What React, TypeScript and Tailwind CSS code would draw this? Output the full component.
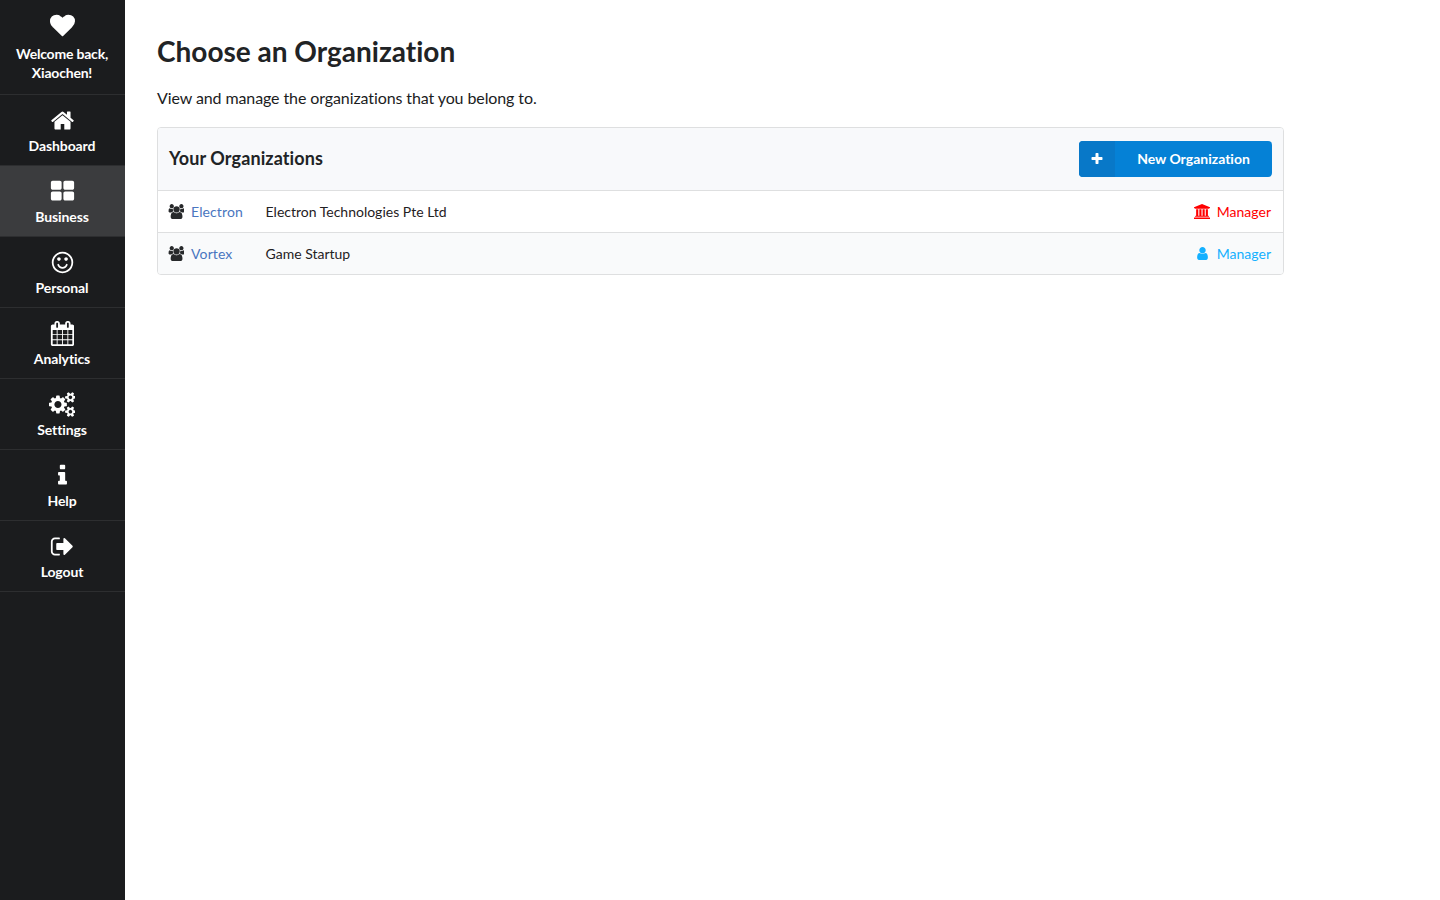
import React from "react";

const P = {
  heart: "M896 1664q-26 0-44-18l-624-602q-10-8-27.5-26t-55.5-65.5-68-97.5-53.5-121-23.5-138q0-220 127-344t351-124q62 0 126.5 21.5t120 58 95.5 68.5 76 68q36-36 76-68t95.5-68.5 120-58 126.5-21.5q224 0 351 124t127 344q0 221-229 450l-623 600q-18 18-44 18z",
  home: "M1472 992v480q0 26-19 45t-45 19h-384v-384h-256v384h-384q-26 0-45-19t-19-45v-480q0-1 .5-3t.5-3l575-474 575 474q1 2 1 6zm223-69l-62 74q-8 9-21 11h-3q-13 0-21-7l-692-577-692 577q-12 8-24 7-13-2-21-11l-62-74q-8-10-7-23.5t11-21.5l719-599q32-26 76-26t76 26l244 204v-195q0-14 9-23t23-9h192q14 0 23 9t9 23v408l219 182q10 8 11 21.5t-7 23.5z",
  grid: "M832 1024v384q0 52-38 90t-90 38h-512q-52 0-90-38t-38-90v-384q0-52 38-90t90-38h512q52 0 90 38t38 90zm0-768v384q0 52-38 90t-90 38h-512q-52 0-90-38t-38-90v-384q0-52 38-90t90-38h512q52 0 90 38t38 90zm896 768v384q0 52-38 90t-90 38h-512q-52 0-90-38t-38-90v-384q0-52 38-90t90-38h512q52 0 90 38t38 90zm0-768v384q0 52-38 90t-90 38h-512q-52 0-90-38t-38-90v-384q0-52 38-90t90-38h512q52 0 90 38t38 90z",
  smile: "M1262 1075q-37 121-138 195t-228 74-228-74-138-195q-8-25 4-48.5t38-31.5q25-8 48.5 4t31.5 38q25 80 92.5 129.5t151.5 49.5 151.5-49.5 92.5-129.5q8-26 32-38t49-4 37 31.5 4 48.5zm-494-435q0 53-37.5 90.5t-90.5 37.5-90.5-37.5-37.5-90.5 37.5-90.5 90.5-37.5 90.5 37.5 37.5 90.5zm512 0q0 53-37.5 90.5t-90.5 37.5-90.5-37.5-37.5-90.5 37.5-90.5 90.5-37.5 90.5 37.5 37.5 90.5zm256 256q0-130-51-248.5t-136.5-204-204-136.5-248.5-51-248.5 51-204 136.5-136.5 204-51 248.5 51 248.5 136.5 204 204 136.5 248.5 51 248.5-51 204-136.5 136.5-204 51-248.5zm128 0q0 209-103 385.5t-279.5 279.5-385.5 103-385.5-103-279.5-279.5-103-385.5 103-385.5 279.5-279.5 385.5-103 385.5 103 279.5 279.5 103 385.5z",
  calendar: "M192 1664h288v-288h-288v288zm352 0h320v-288h-320v288zm-352-352h288v-320h-288v320zm352 0h320v-320h-320v320zm-352-384h288v-288h-288v288zm736 736h320v-288h-320v288zm-384-736h320v-288h-320v288zm768 736h288v-288h-288v288zm-384-352h320v-320h-320v320zm-352-864v-288q0-13-9.5-22.5t-22.5-9.5h-64q-13 0-22.5 9.5t-9.5 22.5v288q0 13 9.5 22.5t22.5 9.5h64q13 0 22.5-9.5t9.5-22.5zm736 864h288v-320h-288v320zm-384-384h320v-288h-320v288zm384 0h288v-288h-288v288zm32-480v-288q0-13-9.5-22.5t-22.5-9.5h-64q-13 0-22.5 9.5t-9.5 22.5v288q0 13 9.5 22.5t22.5 9.5h64q13 0 22.5-9.5t9.5-22.5zm384-64v1280q0 52-38 90t-90 38h-1408q-52 0-90-38t-38-90v-1280q0-52 38-90t90-38h128v-96q0-66 47-113t113-47h64q66 0 113 47t47 113v96h384v-96q0-66 47-113t113-47h64q66 0 113 47t47 113v96h128q52 0 90 38t38 90z",
  cogs: "M896 896q0-106-75-181t-181-75-181 75-75 181 75 181 181 75 181-75 75-181zm768 512q0-52-38-90t-90-38-90 38-38 90q0 53 37.5 90.5t90.5 37.5 90.5-37.5 37.5-90.5zm0-1024q0-52-38-90t-90-38-90 38-38 90q0 53 37.5 90.5t90.5 37.5 90.5-37.5 37.5-90.5zm-384 421v185q0 10-7 19.5t-16 10.5l-155 24q-11 35-32 76 34 48 90 115 7 11 7 20 0 12-7 19-23 30-82.5 89.5t-78.5 59.5q-11 0-21-7l-115-90q-37 19-77 31-11 108-23 155-7 24-30 24h-186q-11 0-20-7.5t-10-17.5l-23-153q-34-10-75-31l-118 89q-7 7-20 7-11 0-21-8-144-133-144-160 0-9 7-19 10-14 41-53t47-61q-23-44-35-82l-152-24q-10-1-17-9.5t-7-19.5v-185q0-10 7-19.5t16-10.5l155-24q11-35 32-76-34-48-90-115-7-11-7-20 0-12 7-20 22-30 82-89t79-59q11 0 21 7l115 90q34-18 77-32 11-108 23-154 7-24 30-24h186q11 0 20 7.5t10 17.5l23 153q34 10 75 31l118-89q8-7 20-7 11 0 21 8 144 133 144 160 0 8-7 19-12 16-42 54t-45 60q23 48 34 82l152 23q10 2 17 10.5t7 19.5zm640 533v140q0 16-149 31-12 27-30 52 51 113 51 138 0 4-4 7-122 71-124 71-8 0-46-47t-52-68q-20 2-30 2t-30-2q-14 21-52 68t-46 47q-2 0-124-71-4-3-4-7 0-25 51-138-18-25-30-52-149-15-149-31v-140q0-16 149-31 13-29 30-52-51-113-51-138 0-4 4-7 4-2 35-20t59-34 30-16q8 0 46 46.5t52 67.5q20-2 30-2t30 2q51-71 92-112l6-2q4 0 124 70 4 3 4 7 0 25-51 138 17 23 30 52 149 15 149 31zm0-1024v140q0 16-149 31-12 27-30 52 51 113 51 138 0 4-4 7-122 71-124 71-8 0-46-47t-52-68q-20 2-30 2t-30-2q-14 21-52 68t-46 47q-2 0-124-71-4-3-4-7 0-25 51-138-18-25-30-52-149-15-149-31v-140q0-16 149-31 13-29 30-52-51-113-51-138 0-4 4-7 4-2 35-20t59-34 30-16q8 0 46 46.5t52 67.5q20-2 30-2t30 2q51-71 92-112l6-2q4 0 124 70 4 3 4 7 0 25-51 138 17 23 30 52 149 15 149 31z",
  info: "M1216 1344v128q0 26-19 45t-45 19h-512q-26 0-45-19t-19-45v-128q0-26 19-45t45-19h64v-384h-64q-26 0-45-19t-19-45v-128q0-26 19-45t45-19h384q26 0 45 19t19 45v576h64q26 0 45 19t19 45zm-128-1152v192q0 26-19 45t-45 19h-256q-26 0-45-19t-19-45v-192q0-26 19-45t45-19h256q26 0 45 19t19 45z",
  logout: "M704 1440q0 4 1 20t.5 26.5-3 23.5-10 19.5-20.5 6.5h-320q-119 0-203.5-84.5t-84.5-203.5v-704q0-119 84.5-203.5t203.5-84.5h320q13 0 22.5 9.5t9.5 22.5q0 4 1 20t.5 26.5-3 23.5-10 19.5-20.5 6.5h-320q-66 0-113 47t-47 113v704q0 66 47 113t113 47h312l11.5 1 11.5 3 8 5.5 7 9 2 13.5zm928-544q0 26-19 45l-544 544q-19 19-45 19t-45-19-19-45v-288h-448q-26 0-45-19t-19-45v-384q0-26 19-45t45-19h448v-288q0-26 19-45t45-19 45 19l544 544q19 19 19 45z",
  users: "M657 896q-162 5-265 128h-134q-82 0-138-40.5t-56-118.5q0-353 124-353 6 0 43.5 21t97.5 42.5 119 21.5q67 0 133-23-5 37-5 66 0 139 81 256zm1071 637q0 120-73 189.5t-194 69.5h-874q-121 0-194-69.5t-73-189.5q0-53 3.5-103.5t14-109 26.5-108.5 43-97.5 62-81 85.5-53.5 111.5-20q10 0 43 21.5t73 48 107 48 135 21.5 135-21.5 107-48 73-48 43-21.5q61 0 111.5 20t85.5 53.5 62 81 43 97.5 26.5 108.5 14 109 3.5 103.5zm-1024-1277q0 106-75 181t-181 75-181-75-75-181 75-181 181-75 181 75 75 181zm704 384q0 159-112.5 271.5t-271.5 112.5-271.5-112.5-112.5-271.5 112.5-271.5 271.5-112.5 271.5 112.5 112.5 271.5zm576 225q0 78-56 118.5t-138 40.5h-134q-103-123-265-128 81-117 81-256 0-29-5-66 66 23 133 23 59 0 119-21.5t97.5-42.5 43.5-21q124 0 124 353zm-128-609q0 106-75 181t-181 75-181-75-75-181 75-181 181-75 181 75 75 181z",
  bank: "M960 0l960 384v128h-128q0 26-20.5 45t-48.5 19h-1526q-28 0-48.5-19t-20.5-45h-128v-128zm-704 640h256v768h128v-768h256v768h128v-768h256v768h128v-768h256v768h59q28 0 48.5 19t20.5 45v64h-1664v-64q0-26 20.5-45t48.5-19h59v-768zm1595 960q28 0 48.5 19t20.5 45v128h-1920v-128q0-26 20.5-45t48.5-19h1782z",
  user: "M1536 1399q0 109-62.5 187t-150.5 78h-854q-88 0-150.5-78t-62.5-187q0-85 8.5-160.5t31.5-152 58.5-131 94-89 134.5-34.5q131 128 313 128t313-128q76 0 134.5 34.5t94 89 58.5 131 31.5 152 8.5 160.5zm-256-887q0 159-112.5 271.5t-271.5 112.5-271.5-112.5-112.5-271.5 112.5-271.5 271.5-112.5 271.5 112.5 112.5 271.5z",
  plus: "M1600 736v192q0 40-28 68t-68 28h-416v416q0 40-28 68t-68 28h-192q-40 0-68-28t-28-68v-416h-416q-40 0-68-28t-28-68v-192q0-40 28-68t68-28h416v-416q0-40 28-68t68-28h192q40 0 68 28t28 68v416h416q40 0 68 28t28 68z",
};

function Fa({ d, size, vw = 1792, className }: { d: string; size: number; vw?: number; className?: string }) {
  return (
    <svg width={(size * vw) / 1792} height={size} viewBox={`0 0 ${vw} 1792`} fill="currentColor" className={className}>
      <path d={d} />
    </svg>
  );
}

const items = [
  { label: "Dashboard", icon: <Fa d={P.home} size={25} /> },
  { label: "Business", icon: <Fa d={P.grid} size={25} />, active: true },
  { label: "Personal", icon: <Fa d={P.smile} size={25} /> },
  { label: "Analytics", icon: <Fa d={P.calendar} size={25} vw={1664} /> },
  { label: "Settings", icon: <Fa d={P.cogs} size={25} vw={1920} /> },
  { label: "Help", icon: <Fa d={P.info} size={25} /> },
  { label: "Logout", icon: <Fa d={P.logout} size={25} vw={1664} /> },
];

function NavItem({ label, icon, active }: { label: string; icon: React.ReactNode; active?: boolean }) {
  return (
    <div className={`h-[71px] flex flex-col items-center border-b border-[#2d2e30] pt-[13px] pr-[1px] ${active ? "bg-[#3b3c3e]" : ""}`}>
      <div className="h-[25px] flex items-center justify-center text-white">{icon}</div>
      <div className="mt-[3px] text-[14px] leading-[19px] font-bold text-white tracking-[-0.1px]">{label}</div>
    </div>
  );
}

function Row({ name, desc, alt, roleIcon, roleClass }: { name: string; desc: string; alt?: boolean; roleIcon: React.ReactNode; roleClass: string }) {
  return (
    <div className={`h-[42px] flex items-center pl-[10px] pr-[12px] text-[14px] border-t border-[#dedfe0] ${alt ? "bg-[#f9fafb]" : "bg-white"}`}>
      <Fa d={P.users} size={15} vw={1920} className="text-[#27292b]" />
      <span className="ml-[7px] w-[74.5px] text-[#4a76c0] tracking-[0.1px]">{name}</span>
      <span className="text-[#1f2123]">{desc}</span>
      <span className={`ml-auto flex items-center ${roleClass}`}>
        {roleIcon}
        <span className="w-[61px] text-right">Manager</span>
      </span>
    </div>
  );
}

export default function App() {
  return (
    <div className="flex min-h-[900px] bg-white font-['Lato','Liberation_Sans',sans-serif] text-[#1b1c1d] [font-variant-ligatures:none]">
      <aside className="w-[125px] shrink-0 bg-[#1b1c1e]">
        <div className="h-[95px] flex flex-col items-center border-b border-[#2d2e30] pt-[13px] pr-[1px]">
          <Fa d={P.heart} size={25} className="text-white" />
          <div className="mt-[6px] text-[14px] leading-[19px] font-bold text-white text-center tracking-[-0.2px]">
            Welcome back,<br />Xiaochen!
          </div>
        </div>
        {items.map((it) => (
          <NavItem key={it.label} {...it} />
        ))}
      </aside>
      <main className="pl-[32px] w-[1159px]">
        <h1 className="mt-[33px] text-[28px] leading-[36px] font-bold text-[#212325]">Choose an Organization</h1>
        <p className="mt-[18px] text-[16px] leading-[22px] text-[#1b1c1d] tracking-[-0.1px]">View and manage the organizations that you belong to.</p>
        <div className="mt-[18px] border border-[#dedfe0] rounded-[4px] overflow-hidden">
          <div className="h-[62px] flex items-center justify-between bg-[#f8f9fb] pl-[11px] pr-[11px]">
            <span className="text-[18px] leading-[24px] pb-[2px] font-bold text-[#212325] tracking-[0.1px]">Your Organizations</span>
            <button className="w-[193px] h-[36px] rounded-[4px] bg-[#0581d6] flex items-center overflow-hidden text-white text-[14px] font-bold">
              <span className="w-[36px] h-full flex items-center justify-center bg-[#0878c8] text-white"><Fa d={P.plus} size={14} /></span>
              <span className="flex-1 text-center leading-[20px] pb-[1px]">New Organization</span>
            </button>
          </div>
          <Row name="Electron" desc="Electron Technologies Pte Ltd" roleClass="text-[#ff0000]" roleIcon={<Fa d={P.bank} size={15} vw={1920} />} />
          <Row name="Vortex" desc="Game Startup" alt roleClass="text-[#14b0ff]" roleIcon={<Fa d={P.user} size={15} />} />
        </div>
      </main>
    </div>
  );
}
